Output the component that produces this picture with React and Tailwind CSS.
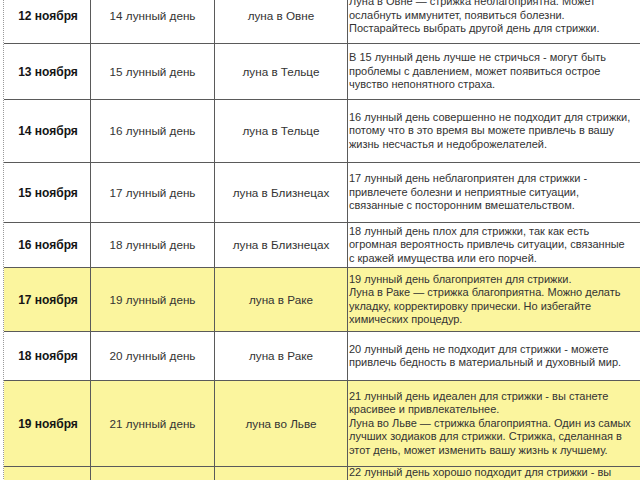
import React from "react";

const rows = [
  {
    date: "12 ноября",
    day: "14 лунный день",
    moon: "луна в Овне",
    h: "h-[56px]",
    y: false,
    lines: [
      "Луна в Овне — стрижка неблагоприятна. Может",
      "ослабнуть иммунитет, появиться болезни.",
      "Постарайтесь выбрать другой день для стрижки.",
    ],
  },
  {
    date: "13 ноября",
    day: "15 лунный день",
    moon: "луна в Тельце",
    h: "h-[56px]",
    y: false,
    lines: [
      "В 15 лунный день лучше не стричься - могут быть",
      "проблемы с давлением, может появиться острое",
      "чувство непонятного страха.",
    ],
  },
  {
    date: "14 ноября",
    day: "16 лунный день",
    moon: "луна в Тельце",
    h: "h-[63px]",
    y: false,
    lines: [
      "16 лунный день совершенно не подходит для стрижки,",
      "потому что в это время вы можете привлечь в вашу",
      "жизнь несчастья и недоброжелателей.",
    ],
  },
  {
    date: "15 ноября",
    day: "17 лунный день",
    moon: "луна в Близнецах",
    h: "h-[60px]",
    y: false,
    lines: [
      "17 лунный день неблагоприятен для стрижки -",
      "привлечете болезни и неприятные ситуации,",
      "связанные с посторонним вмешательством.",
    ],
  },
  {
    date: "16 ноября",
    day: "18 лунный день",
    moon: "луна в Близнецах",
    h: "h-[45px]",
    y: false,
    lines: [
      "18 лунный день плох для стрижки, так как есть",
      "огромная вероятность привлечь ситуации, связанные",
      "с кражей имущества или его порчей.",
    ],
  },
  {
    date: "17 ноября",
    day: "19 лунный день",
    moon: "луна в Раке",
    h: "h-[64px]",
    y: true,
    lines: [
      "19 лунный день благоприятен для стрижки.",
      "Луна в Раке — стрижка благоприятна. Можно делать",
      "укладку, корректировку прически. Но избегайте",
      "химических процедур.",
    ],
  },
  {
    date: "18 ноября",
    day: "20 лунный день",
    moon: "луна в Раке",
    h: "h-[49px]",
    y: false,
    lines: [
      "20 лунный день не подходит для стрижки - можете",
      "привлечь бедность в материальный и духовный мир.",
    ],
  },
  {
    date: "19 ноября",
    day: "21 лунный день",
    moon: "луна во Льве",
    h: "h-[86px]",
    y: true,
    lines: [
      "21 лунный день идеален для стрижки - вы станете",
      "красивее и привлекательнее.",
      "Луна во Льве — стрижка благоприятна. Один из самых",
      "лучших зодиаков для стрижки. Стрижка, сделанная в",
      "этот день, может изменить вашу жизнь к лучшему.",
    ],
  },
];

function Row({ r }) {
  const bg = r.y ? "bg-[#fbf59e]" : "bg-white";
  return (
    <div
      className={`grid grid-cols-[87px_124px_133px_1fr] border-b border-[#5a5a5a] ${r.h} ${bg}`}
    >
      <div className="flex items-center justify-center border-r border-[#5a5a5a] pl-[2px] text-[12px] font-bold text-[#151515]">
        {r.date}
      </div>
      <div className="flex items-center justify-center border-r border-[#5a5a5a] text-[11.7px] text-[#333]">
        {r.day}
      </div>
      <div className="flex items-center justify-center border-r border-[#5a5a5a] text-[11.7px] text-[#333]">
        {r.moon}
      </div>
      <div className="flex flex-col justify-center pl-[1px] text-[#333] leading-[13.5px] whitespace-nowrap">
        {r.lines.map((l, i) => (
          <div key={i}>{l}</div>
        ))}
      </div>
    </div>
  );
}

export default function App() {
  return (
    <div
      className="w-[640px] h-[480px] overflow-hidden bg-white text-[11px]"
      style={{ fontFamily: '"Liberation Sans", Arial, sans-serif' }}
    >
      <div className="ml-[3px] -mt-[12px] w-[680px] border-l border-dotted border-[#9a9a9a]">
        {rows.map((r, i) => (
          <Row key={i} r={r} />
        ))}
        <div className="grid grid-cols-[87px_124px_133px_1fr] h-[60px] bg-[#fbf59e]">
          <div className="border-r border-[#5a5a5a]" />
          <div className="border-r border-[#5a5a5a]" />
          <div className="border-r border-[#5a5a5a]" />
          <div className="pl-[1px] -mt-[1px] text-[#333] leading-[13.5px] whitespace-nowrap">
            <div>22 лунный день хорошо подходит для стрижки - вы</div>
            <div>привлечете удачу и успех в делах.</div>
          </div>
        </div>
      </div>
    </div>
  );
}
